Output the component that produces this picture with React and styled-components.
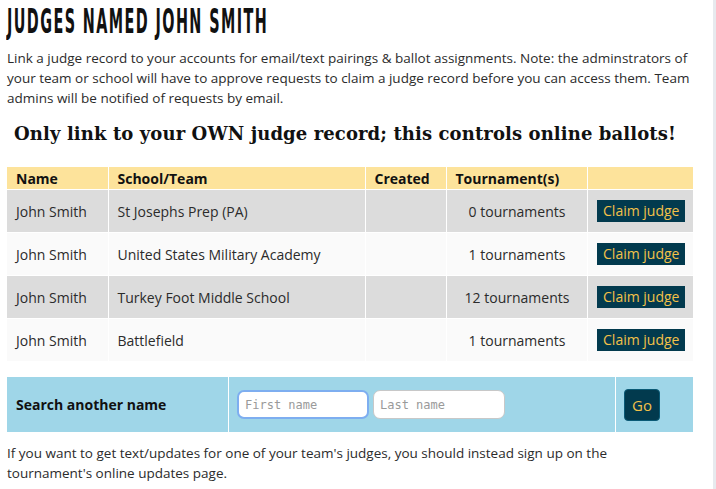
import styled, { createGlobalStyle } from 'styled-components'

const judges = [
    { name: 'John Smith', school: 'St Josephs Prep (PA)', count: 0 },
    { name: 'John Smith', school: 'United States Military Academy', count: 1 },
    { name: 'John Smith', school: 'Turkey Foot Middle School', count: 12 },
    { name: 'John Smith', school: 'Battlefield', count: 1 },
]

const App = () => {
    return (
        <>
            <GlobalStyle />
            <Page>
                <Main>
                    <Title>Judges named John Smith</Title>
                    <Intro>
                        Link a judge record to your accounts for email/text pairings &amp; ballot assignments. Note: the adminstrators of
                        your team or school will have to approve requests to claim a judge record before you can access them. Team
                        admins will be notified of requests by email.
                    </Intro>
                    <Warning>Only link to your OWN judge record; this controls online ballots!</Warning>

                    <Table>
                        <colgroup>
                            <col style={{ width: 101 }} />
                            <col style={{ width: 257 }} />
                            <col style={{ width: 81 }} />
                            <col style={{ width: 141 }} />
                            <col style={{ width: 106 }} />
                        </colgroup>
                        <thead>
                            <tr>
                                <Th>Name</Th>
                                <Th>School/Team</Th>
                                <Th>Created</Th>
                                <Th>Tournament(s)</Th>
                                <Th />
                            </tr>
                        </thead>
                        <tbody>
                            {judges.map((j, i) => (
                                <Row key={i} odd={i % 2 === 0}>
                                    <Td>{j.name}</Td>
                                    <Td>{j.school}</Td>
                                    <Td />
                                    <Td center>{j.count} tournaments</Td>
                                    <Td center tight>
                                        <ClaimButton>Claim judge</ClaimButton>
                                    </Td>
                                </Row>
                            ))}
                        </tbody>
                    </Table>

                    <SearchBar>
                        <SearchLabel>Search another name</SearchLabel>
                        <SearchInputs>
                            <NameInput focused placeholder="First name" />
                            <NameInput placeholder="Last name" />
                        </SearchInputs>
                        <SearchGo>
                            <GoButton>Go</GoButton>
                        </SearchGo>
                    </SearchBar>

                    <Footer>
                        If you want to get text/updates for one of your team's judges, you should instead sign up on the
                        tournament's online updates page.
                    </Footer>
                </Main>
                <Edge />
            </Page>
        </>
    )
}

const GlobalStyle = createGlobalStyle`
    body{
        margin: 0;
        background: #fff;
        font-family: "Open Sans", "DejaVu Sans", sans-serif;
        color: #2b2b2b;
    }
`
const Page = styled.div`
    display: flex;
    min-height: 489px;
`
const Main = styled.div`
    flex: 1;
    padding: 0 20px 0 7px;
`
const Edge = styled.div`
    width: 3px;
    background: #e7eaee;
`
const Title = styled.h1`
    margin: 0;
    padding-top: 3px;
    height: 40px;
    font-family: "DejaVu Sans Condensed", "DejaVu Sans", sans-serif;
    font-weight: bold;
    font-size: 34px;
    line-height: 36px;
    text-transform: uppercase;
    letter-spacing: 3px;
    color: #111;
    transform: scaleX(0.47);
    transform-origin: left center;
    white-space: nowrap;
`
const Intro = styled.p`
    margin: 5px 0 0;
    font-size: 13.5px;
    line-height: 20px;
`
const Warning = styled.h4`
    margin: 14px 0 0;
    font-family: "DejaVu Serif", "Liberation Serif", serif;
    font-weight: bold;
    font-size: 18px;
    line-height: 24px;
    letter-spacing: 0.1px;
    text-align: center;
    color: #111;
    padding-right: 10px;
`
const Table = styled.table`
    margin-top: 21px;
    width: 686px;
    border-collapse: collapse;
    table-layout: fixed;
    font-size: 14px;
`
const Th = styled.th`
    background: #fde39b;
    height: 22px;
    padding: 0 8px 0 9px;
    text-align: left;
    font-weight: bold;
    color: #111;
    border-left: 1px solid #fff;
    border-bottom: 1px solid #fff;
    &:first-child{ border-left: none; }
`
const Row = styled.tr`
    background: ${p => p.odd ? '#dcdcdc' : '#fafafa'};
`
const Td = styled.td`
    height: 42px;
    padding: ${p => p.tight ? '0 0 0 2px' : '0 8px 0 9px'};
    text-align: ${p => p.center ? 'center' : 'left'};
    white-space: nowrap;
    border-left: 1px solid #fff;
    border-bottom: 1px solid #fff;
    &:first-child{ border-left: none; }
`
const ClaimButton = styled.span`
    display: inline-block;
    background: #023a4e;
    color: #f2c149;
    font-size: 14px;
    line-height: 22px;
    padding: 0 6px;
    white-space: nowrap;
`
const SearchBar = styled.div`
    margin-top: 15px;
    display: grid;
    grid-template-columns: 221px 387px 78px;
    height: 55px;
    background: #9fd6e8;
`
const SearchLabel = styled.div`
    display: flex;
    align-items: center;
    padding-left: 9px;
    font-size: 14px;
    font-weight: bold;
    color: #111;
`
const SearchInputs = styled.div`
    display: flex;
    align-items: center;
    gap: 4px;
    padding-left: 8px;
    border-left: 1px solid #fff;
`
const NameInput = styled.input`
    box-sizing: border-box;
    width: 132px;
    height: 29px;
    border-radius: 7px;
    border: ${p => p.focused ? '2px solid #7eaef0' : '1px solid #c8c8c8'};
    padding: 0 6px;
    font-family: "DejaVu Sans Mono", monospace;
    font-size: 12px;
    outline: none;
    background: #fff;
    &::placeholder{ color: #9a9a9a; }
`
const SearchGo = styled.div`
    display: flex;
    align-items: center;
    padding-left: 8px;
    border-left: 1px solid #fff;
`
const GoButton = styled.button`
    width: 36px;
    height: 32px;
    border-radius: 4px;
    border: 1px solid #0b5a76;
    background: #023a4e;
    color: #f2c149;
    font-family: "Open Sans", sans-serif;
    font-size: 15px;
    padding: 0;
`
const Footer = styled.p`
    margin: 11px 0 0;
    font-size: 13.5px;
    line-height: 20px;
`

export default App
